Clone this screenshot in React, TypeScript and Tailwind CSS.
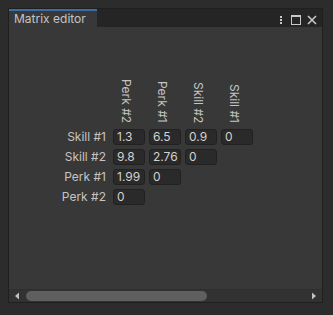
const columns = ['Perk #2', 'Perk #1', 'Skill #2', 'Skill #1'];

const rows = [
  { label: 'Skill #1', values: ['1.3', '6.5', '0.9', '0'] },
  { label: 'Skill #2', values: ['9.8', '2.76', '0'] },
  { label: 'Perk #1', values: ['1.99', '0'] },
  { label: 'Perk #2', values: ['0'] },
];

const font = { fontFamily: 'Inter, "Noto Sans", sans-serif' };

const TitleIcons = () => (
  <div className="ml-auto flex items-center pr-[5px] pt-[3px]">
    <div className="flex flex-col gap-[1px] px-[3px]">
      <span className="h-[2px] w-[2px] bg-[#c8c8c8]" />
      <span className="h-[2px] w-[2px] bg-[#c8c8c8]" />
      <span className="h-[2px] w-[2px] bg-[#c8c8c8]" />
    </div>
    <div className="ml-[6px] h-[10px] w-[10px] border border-t-2 border-[#c8c8c8]" />
    <svg width="10" height="10" viewBox="0 0 10 10" className="ml-[6px]">
      <path d="M1 1 L9 9 M9 1 L1 9" stroke="#c8c8c8" strokeWidth="1.6" />
    </svg>
  </div>
);

export default function App() {
  return (
    <div className="h-[315px] w-[333px] bg-[#2c2c2c] p-2" style={font}>
      <div className="flex h-[295px] w-[315px] flex-col border border-[#1f1f1f] bg-[#383838]">
        {/* title bar */}
        <div className="flex h-[18px] bg-[#252525]">
          <div className="w-[88px] border-t-2 border-[#3a6fa5] bg-[#383838] pl-[5px] text-[12px] leading-[16px] text-[#c4c4c4]">
            Matrix editor
          </div>
          <TitleIcons />
        </div>

        {/* matrix */}
        <div className="flex-1 pl-[38px] pt-[50px] text-[12px] text-[#c4c4c4]">
          <div className="flex gap-[4px]">
            <div className="w-[62px]" />
            {columns.map((c) => (
              <div key={c} className="flex h-[48px] w-[32px] items-end pb-[2px] pl-[5px]">
                <span className="leading-[16px] [writing-mode:vertical-rl]">{c}</span>
              </div>
            ))}
          </div>
          <div className="mt-[4px] flex flex-col gap-[4px]">
            {rows.map((r) => (
              <div key={r.label} className="flex gap-[4px]">
                <div className="w-[62px] pr-[3px] text-right leading-[16px]">{r.label}</div>
                {r.values.map((v, i) => (
                  <div
                    key={i}
                    className="h-[16px] w-[32px] rounded-[3px] border border-[#212121] bg-[#2a2a2a] pl-[3px] leading-[14px] text-[#d2d2d2]"
                  >
                    {v}
                  </div>
                ))}
              </div>
            ))}
          </div>
        </div>

        {/* horizontal scrollbar */}
        <div className="flex h-[13px] items-center border-t border-[#2f2f2f] bg-[#323232] pb-[1px]">
          <svg width="14" height="10" viewBox="0 0 14 10" className="ml-[2px]">
            <path d="M4 5 L8 1.5 L8 8.5 Z" fill="#c0c0c0" />
          </svg>
          <div className="ml-[1px] h-[10px] w-[181px] rounded-full bg-[#5f5f5f]" />
          <svg width="14" height="10" viewBox="0 0 14 10" className="ml-auto mr-[2px]">
            <path d="M10 5 L6 1.5 L6 8.5 Z" fill="#c0c0c0" />
          </svg>
        </div>
      </div>
    </div>
  );
}
